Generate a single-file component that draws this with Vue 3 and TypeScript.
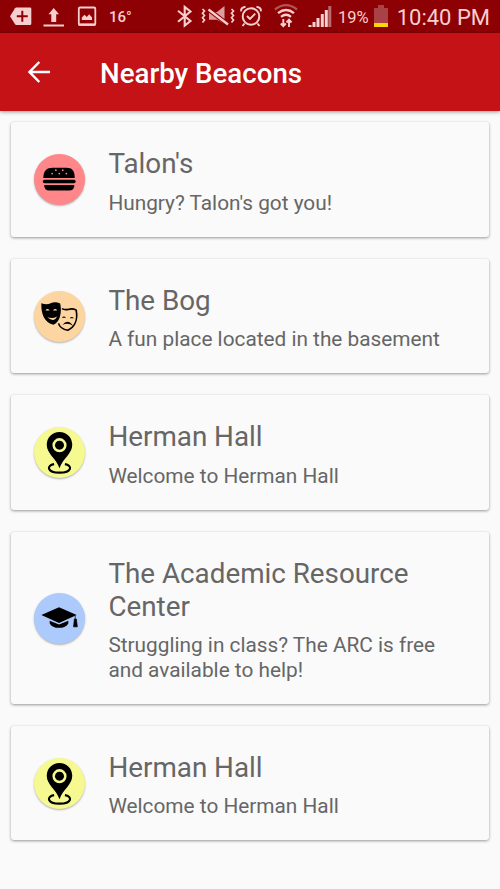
<script setup lang="ts">
type IconName = 'burger' | 'masks' | 'pin' | 'cap'

interface Beacon {
  title: string
  description: string
  icon: IconName
}

const beacons: Beacon[] = [
  { title: "Talon's", description: "Hungry? Talon's got you!", icon: 'burger' },
  { title: 'The Bog', description: 'A fun place located in the basement', icon: 'masks' },
  { title: 'Herman Hall', description: 'Welcome to Herman Hall', icon: 'pin' },
  {
    title: 'The Academic Resource Center',
    description: 'Struggling in class? The ARC is free and available to help!',
    icon: 'cap',
  },
  { title: 'Herman Hall', description: 'Welcome to Herman Hall', icon: 'pin' },
]
</script>

<template>
  <div class="screen">
    <header class="status">
      <svg class="status-icons" width="340" height="33" viewBox="0 0 340 33" fill="none" stroke="#f8cfcf">
        <path d="M10 16.300 15 8.200Q15.500 7.500 16.500 7.500H30Q31.300 7.500 31.300 8.800V23.700Q31.300 25 30 25H16.500Q15.500 25 15 24.300Z" fill="#f8cfcf" stroke="none" />
        <path d="M22.300 10.800V21.800M16.800 16.300H27.800" stroke="#8d0004" stroke-width="2" />
        <path d="M53.700 8 59 14.300H56.200V22H51.300V14.300H48.500Z" fill="#f8cfcf" stroke="none" />
        <path d="M43.500 25.500H64" stroke-width="2" />
        <rect x="78.800" y="7.500" width="16.500" height="17.200" rx="1.200" stroke-width="1.800" />
        <path d="M78.500 24.700H95.500" stroke-width="2.400" />
        <path d="M81.800 20V17.500L84.500 14.800 86.800 17 89.200 14.300 92 17.500V20Z" fill="#f8cfcf" stroke="none" />
        <path d="M178 10.800 190.500 21 184.700 25.600V7L190.500 11.500 178 21.700" stroke-width="2.100" />
        <path d="M202.500 9 204.500 11 202.500 13.200 204.500 15.500 202.500 17.800 204.500 20 202.500 22.500M231.500 9 233.500 11 231.500 13.200 233.500 15.500 231.500 17.800 233.500 20 231.500 22.500" stroke-width="1.700" />
        <path d="M209 12H217L224.500 6V24L217 19.800H209Z" fill="#dc9d9f" stroke="none" />
        <path d="M208.500 9.500 228 24.500" stroke="#8d0004" stroke-width="4.500" />
        <path d="M208.500 9.500 228 24.500" stroke-width="2.300" />
        <circle cx="251" cy="16.500" r="8.300" stroke-width="2" />
        <path d="M247 16 250 19 255.200 13.700M244.500 23.500 242.500 26M257.500 23.500 259.500 26M241.200 11.300Q240.500 7.500 245.500 6.700M256.500 6.700Q261.500 7.500 260.800 11.300" stroke-width="1.900" />
        <path d="M275 9.500Q286 .8 297 9.500" stroke="#b25356" stroke-width="2.300" />
        <path d="M278 13.200Q286 6.800 294 13.200M281 16.800Q286 12.600 291 16.800" stroke-width="2.300" />
        <path d="M283.300 19V26M280.800 23.500 283.300 26.200 285.800 23.500M289 27V20M286.500 22.500 289 19.700 291.500 22.500" stroke-width="1.900" />
        <path d="M310 27V25M314 27V22M318 27V18M322.300 27V14M326.300 27V10" stroke-width="3" />
        <path d="M329.800 27V6" stroke="#b86b6d" stroke-width="3" />
      </svg>
      <span class="temperature">16°</span>
      <span class="battery-text">19%</span>
      <svg class="battery" width="14" height="22" viewBox="0 0 14 22">
        <path d="M0 3H4V0H10V3H14V22H0Z" fill="#a94247" />
        <path d="M0 18H14V22H0Z" fill="#ffd400" />
      </svg>
      <time class="clock">10:40 PM</time>
    </header>
    <nav class="toolbar">
      <button class="back" aria-label="Back">
        <svg width="24" height="24" viewBox="0 0 24 24" fill="none" stroke="#fff" stroke-width="2.500">
          <path d="M23 12H3M12.300 2 2.500 12 12.300 22" />
        </svg>
      </button>
      <h1>Nearby Beacons</h1>
    </nav>
    <main class="list">
      <article v-for="(beacon, index) in beacons" :key="index" class="card">
        <span class="avatar" :class="beacon.icon">
          <svg v-if="beacon.icon === 'burger'" width="51" height="51" viewBox="0 0 52 52">
            <path d="M9.500 24.500C9.500 17 13 14 19 14H33C39 14 41.500 17 41.500 24.500Z" />
            <rect x="9" y="26.200" width="33.500" height="3.600" rx="1.800" />
            <path d="M10.500 31.700H41V33Q40.500 37.300 36 37.300H15.500Q11 37.300 10.500 33Z" />
            <g fill="#ff8789">
              <circle cx="22.300" cy="16.500" r=".9" /><circle cx="29.300" cy="16.500" r=".9" />
              <circle cx="18.500" cy="20" r=".9" /><circle cx="25.800" cy="20" r=".9" /><circle cx="33" cy="20" r=".9" />
            </g>
          </svg>
          <svg v-else-if="beacon.icon === 'masks'" width="51" height="51" viewBox="0 0 52 52">
            <path d="M7.500 12.500Q13 14.300 17 12.500 21.500 10.500 26.700 12.800C28.500 21 27 31.500 20 34.500C10.500 32.500 7 23 7.500 12.500Z" />
            <path d="M11.700 19.800Q13.700 17 15.900 19.800ZM19.300 19.800Q21.700 17 23.700 19.800ZM13.500 26.500Q18.500 29 23.500 26Q20 33 13.500 26.500Z" fill="#fdd5a0" />
            <path d="M28.500 18Q31 19.500 35 18.800 39.500 17.500 43 19.500C45 30 41 37 34.500 40C29 39 26 36.500 25 33" fill="none" stroke="#000" stroke-width="1.700" />
            <path d="M28.300 27.400Q30.500 24.600 32.700 27.400ZM36.300 27.900Q38.500 25 40.700 27.900ZM29 34.700Q34.500 27.500 40 35.700 34.500 31.500 29 34.700Z" />
          </svg>
          <svg v-else-if="beacon.icon === 'pin'" width="51" height="51" viewBox="0 0 52 52">
            <path fill-rule="evenodd" d="M26 5.200C18.500 5.200 13 10.900 13 18.200C13 27.500 22.500 32 26 42C29.500 32 39 27.500 39 18.200C39 10.900 33.500 5.200 26 5.200ZM26 11.300A7.200 7.200 0 1 1 26 25.700A7.200 7.200 0 1 1 26 11.300Z" />
            <circle cx="26" cy="18.500" r="4.600" />
            <path d="M20.500 37.800C12.500 39 13 46.500 26 46.500C39 46.500 39.500 39 31.500 37.800" fill="none" stroke="#000" stroke-width="2.200" />
          </svg>
          <svg v-else width="51" height="51" viewBox="0 0 52 52">
            <path d="M7.500 22.500 25.500 14.500 43.500 22.500 25.500 30.500Z" />
            <path d="M16 28.200 25.500 32 35 28.200V31Q32.500 35.500 25.500 35.500T16 31Z" />
            <path d="M42 23V28M41.200 26.500H43.200L44.200 34.500H40.300Z" stroke="#000" stroke-width=".7" />
          </svg>
        </span>
        <div class="copy">
          <h2>{{ beacon.title }}</h2>
          <p>{{ beacon.description }}</p>
        </div>
      </article>
    </main>
  </div>
</template>

<style>
body {
  margin: 0;
  background: #fafafa;
}
</style>

<style scoped>
.screen {
  width: 500px;
  height: 889px;
  overflow: hidden;
  background: #fafafa;
  font-family: Roboto, sans-serif;
}

.status {
  position: relative;
  display: flex;
  align-items: center;
  box-sizing: border-box;
  height: 33px;
  padding-right: 10px;
  background: #8d0004;
  color: #f8cfcf;
}

.status-icons {
  flex: none;
  width: 340px;
  margin-right: -2px;
}

.temperature {
  position: absolute;
  left: 109px;
  top: 8px;
  font-size: 15px;
  line-height: 18px;
  font-weight: 500;
}

.battery-text {
  width: 36px;
  margin-top: 2px;
  font-size: 16.500px;
}

.battery {
  flex: none;
  margin-top: -1px;
}

.clock {
  margin: 2px 0 0 auto;
  font-size: 22px;
  white-space: nowrap;
}

.toolbar {
  position: relative;
  display: flex;
  align-items: center;
  height: 78px;
  padding-left: 27px;
  background: #c51216;
  box-shadow: 0 1px 4px rgba(0, 0, 0, 0.4);
}

.back {
  display: flex;
  width: 73px;
  padding: 0;
  border: 0;
  background: none;
}

h1 {
  margin: 2px 0 0;
  color: #fff;
  font-size: 27.700px;
  font-weight: 500;
  line-height: 33px;
}

.list {
  display: flex;
  flex-direction: column;
  gap: 22px;
  padding: 11px 11px 0;
}

.card {
  display: flex;
  align-items: center;
  box-sizing: border-box;
  padding: 25px 23px 21.500px;
  border-radius: 3px;
  background: #fafafa;
  box-shadow: 0 1px 3px rgba(0, 0, 0, 0.4);
}

.avatar {
  flex: none;
  width: 51px;
  height: 51px;
  margin: -2.500px 23.400px 0 0;
  border-radius: 50%;
  box-shadow: 0 1px 2px rgba(0, 0, 0, 0.3);
}

.avatar svg {
  display: block;
}

.burger { background: #ff8789; }
.masks { background: #fdd5a0; }
.pin { background: #f5f990; }
.cap { background: #accafb; }

.copy {
  color: #666;
}

h2 {
  margin: 0 0 10.500px;
  font-size: 27.800px;
  font-weight: 400;
  line-height: 33px;
}

p {
  margin: 0;
  font-size: 20.800px;
  line-height: 24.500px;
}
</style>
